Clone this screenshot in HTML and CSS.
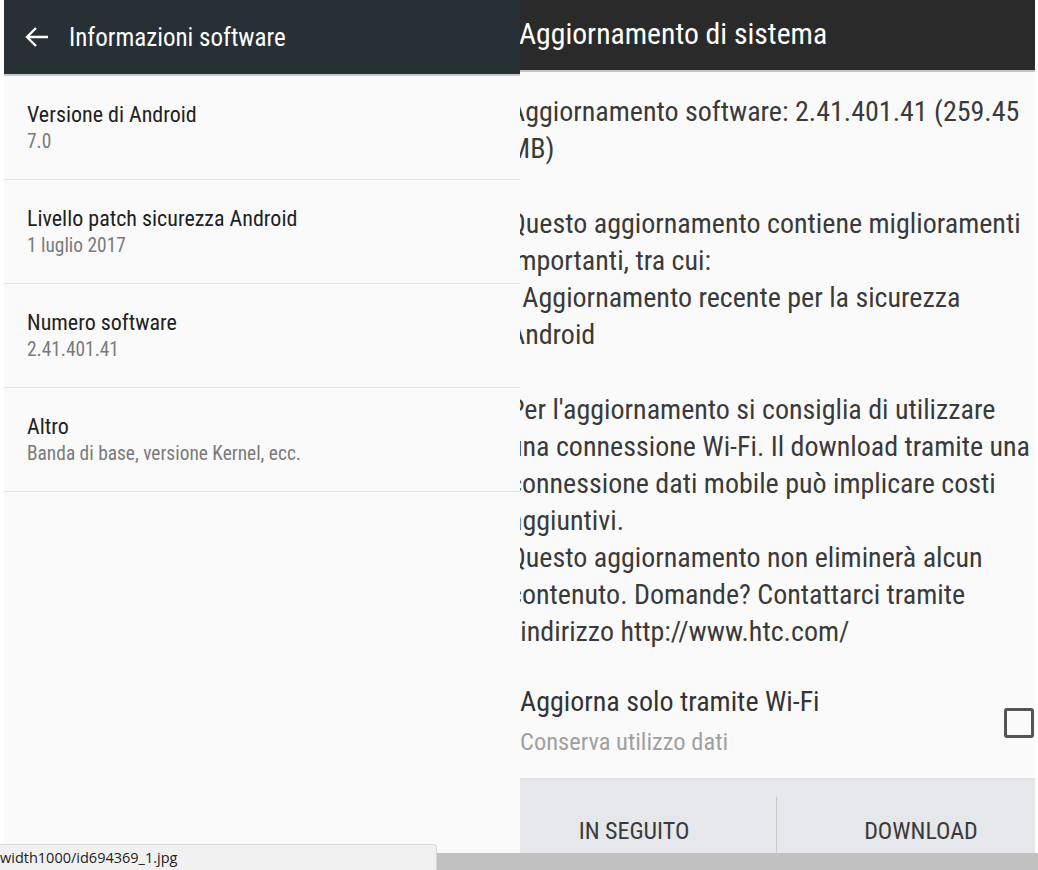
FILE: index.html
```html
<!DOCTYPE html>
<html>
<head>
	<title>Informazioni software</title>
	<link rel="stylesheet" href="styles.css">
</head>
<body>
	<div id='page'>
		<div id='screens'>
			<div class='panel left'>
				<div class='topbar'>
					<svg class='back' width='26' height='22' viewBox='0 0 26 22'>
						<path d='M24 11H3M12 2L3 11l9 9' fill='none' stroke='#fff' stroke-width='2.4' />
					</svg>
					<span class='topTitle'>Informazioni software</span>
				</div>
				<div class='row'>
					<div class='rowTitle'>Versione di Android</div>
					<div class='rowSub'>7.0</div>
				</div>
				<div class='row'>
					<div class='rowTitle'>Livello patch sicurezza Android</div>
					<div class='rowSub'>1 luglio 2017</div>
				</div>
				<div class='row'>
					<div class='rowTitle'>Numero software</div>
					<div class='rowSub'>2.41.401.41</div>
				</div>
				<div class='row'>
					<div class='rowTitle'>Altro</div>
					<div class='rowSub'>Banda di base, versione Kernel, ecc.</div>
				</div>
			</div>

			<div class='panel right'>
				<div class='topbar dark'>
					<span class='topTitle big'>Aggiornamento di sistema</span>
				</div>
				<div class='body'>
					<p>Aggiornamento software: 2.41.401.41 (259.45<br>MB)</p>
					<p>Questo aggiornamento contiene miglioramenti<br>importanti, tra cui:<br>- Aggiornamento recente per la sicurezza<br>Android</p>
					<p>Per l'aggiornamento si consiglia di utilizzare<br>una connessione Wi-Fi. Il download tramite una<br>connessione dati mobile può implicare costi<br>aggiuntivi.<br>Questo aggiornamento non eliminerà alcun<br>contenuto. Domande? Contattarci tramite<br>l'indirizzo http://www.htc.com/</p>
				</div>
				<div class='option'>
					<div>
						<div class='optTitle'>Aggiorna solo tramite Wi-Fi</div>
						<div class='optSub'>Conserva utilizzo dati</div>
					</div>
					<div class='check'></div>
				</div>
				<div class='buttons'>
					<div class='btn later'>IN SEGUITO</div>
					<div class='btn divided'>DOWNLOAD</div>
				</div>
			</div>
		</div>
		<div id='hbar'></div>
		<div id='status'>width1000/id694369_1.jpg</div>
	</div>
</body>
</html>
```

FILE: styles.css
```css
body {
	margin: 0;
	background-color: #ffffff;
	font-family: Roboto, "Noto Sans", sans-serif;
}

#page {
	position: relative;
	width: 1038px;
	height: 870px;
	overflow: hidden;
}

#screens {
	display: flex;
	height: 853px;
}

.panel {
	background-color: #fafafa;
	overflow: hidden;
	display: flex;
	flex-direction: column;
}

.left {
	width: 516px;
	margin-left: 4px;
}

.right {
	width: 515px;
}

.topbar {
	display: flex;
	align-items: center;
	height: 74px;
	background-color: #263035;
	border-bottom: 2px solid #c9cdd0;
	flex-shrink: 0;
}

.topbar.dark {
	height: 70px;
	background-color: #2a2a2a;
	border-bottom: 2px solid #c4c4c4;
}

.back {
	margin-left: 20px;
	margin-right: 19px;
}

.topTitle {
	color: #ffffff;
	font-size: 25px;
	font-stretch: 85%;
}

.topTitle.big {
	font-size: 29.7px;
	margin-top: -4px;
	margin-left: -1px;
}

.row {
	border-bottom: 1px solid #e6e6e6;
	padding: 25px 0 0 23px;
	height: 78px;
}

.rowTitle {
	font-size: 22px;
	line-height: 28px;
	color: #222222;
	font-stretch: 85%;
}

.rowSub {
	font-size: 19.4px;
	line-height: 26px;
	color: #7a7a7a;
	font-stretch: 85%;
}

.body {
	margin-left: -11px;
	padding-top: 21px;
	white-space: nowrap;
	color: #3a3a3a;
	font-size: 28px;
	line-height: 37px;
	font-stretch: 85%;
}

.body p {
	margin: 0 0 38px 0;
}

.option {
	display: flex;
	justify-content: space-between;
	align-items: flex-start;
	margin-top: -4px;
	height: 94px;
	border-bottom: 2px solid #e0e2e4;
	flex-shrink: 0;
}

.optTitle {
	font-size: 28px;
	line-height: 36px;
	color: #333333;
	font-stretch: 85%;
}

.optSub {
	margin-top: 5px;
	font-size: 24.5px;
	line-height: 34px;
	color: #a0a0a0;
	font-stretch: 85%;
}

.check {
	width: 24px;
	height: 24px;
	border: 3px solid #555555;
	border-radius: 3px;
	margin-right: 1px;
	margin-top: 24px;
}

.buttons {
	flex: 1;
	display: flex;
	background-color: #e5e7eb;
}

.btn {
	flex: 1;
	text-align: center;
	margin-top: 17px;
	padding-top: 20px;
	font-size: 24px;
	line-height: 28px;
	color: #3a3a3a;
	font-stretch: 85%;
}

.btn.later {
	padding-right: 28px;
}

.btn.divided {
	border-left: 1px solid #c8c8c8;
	padding-left: 30px;
}

#hbar {
	height: 17px;
	background-color: #c1c1c1;
}

#status {
	position: absolute;
	left: 0;
	bottom: 0;
	width: 436px;
	height: 25px;
	line-height: 25px;
	background-color: #f1f1f1;
	border-top: 1px solid #d6d6d6;
	border-right: 1px solid #d6d6d6;
	border-top-right-radius: 4px;
	font-family: "Open Sans", sans-serif;
	font-size: 14.5px;
	color: #222222;
}
```
